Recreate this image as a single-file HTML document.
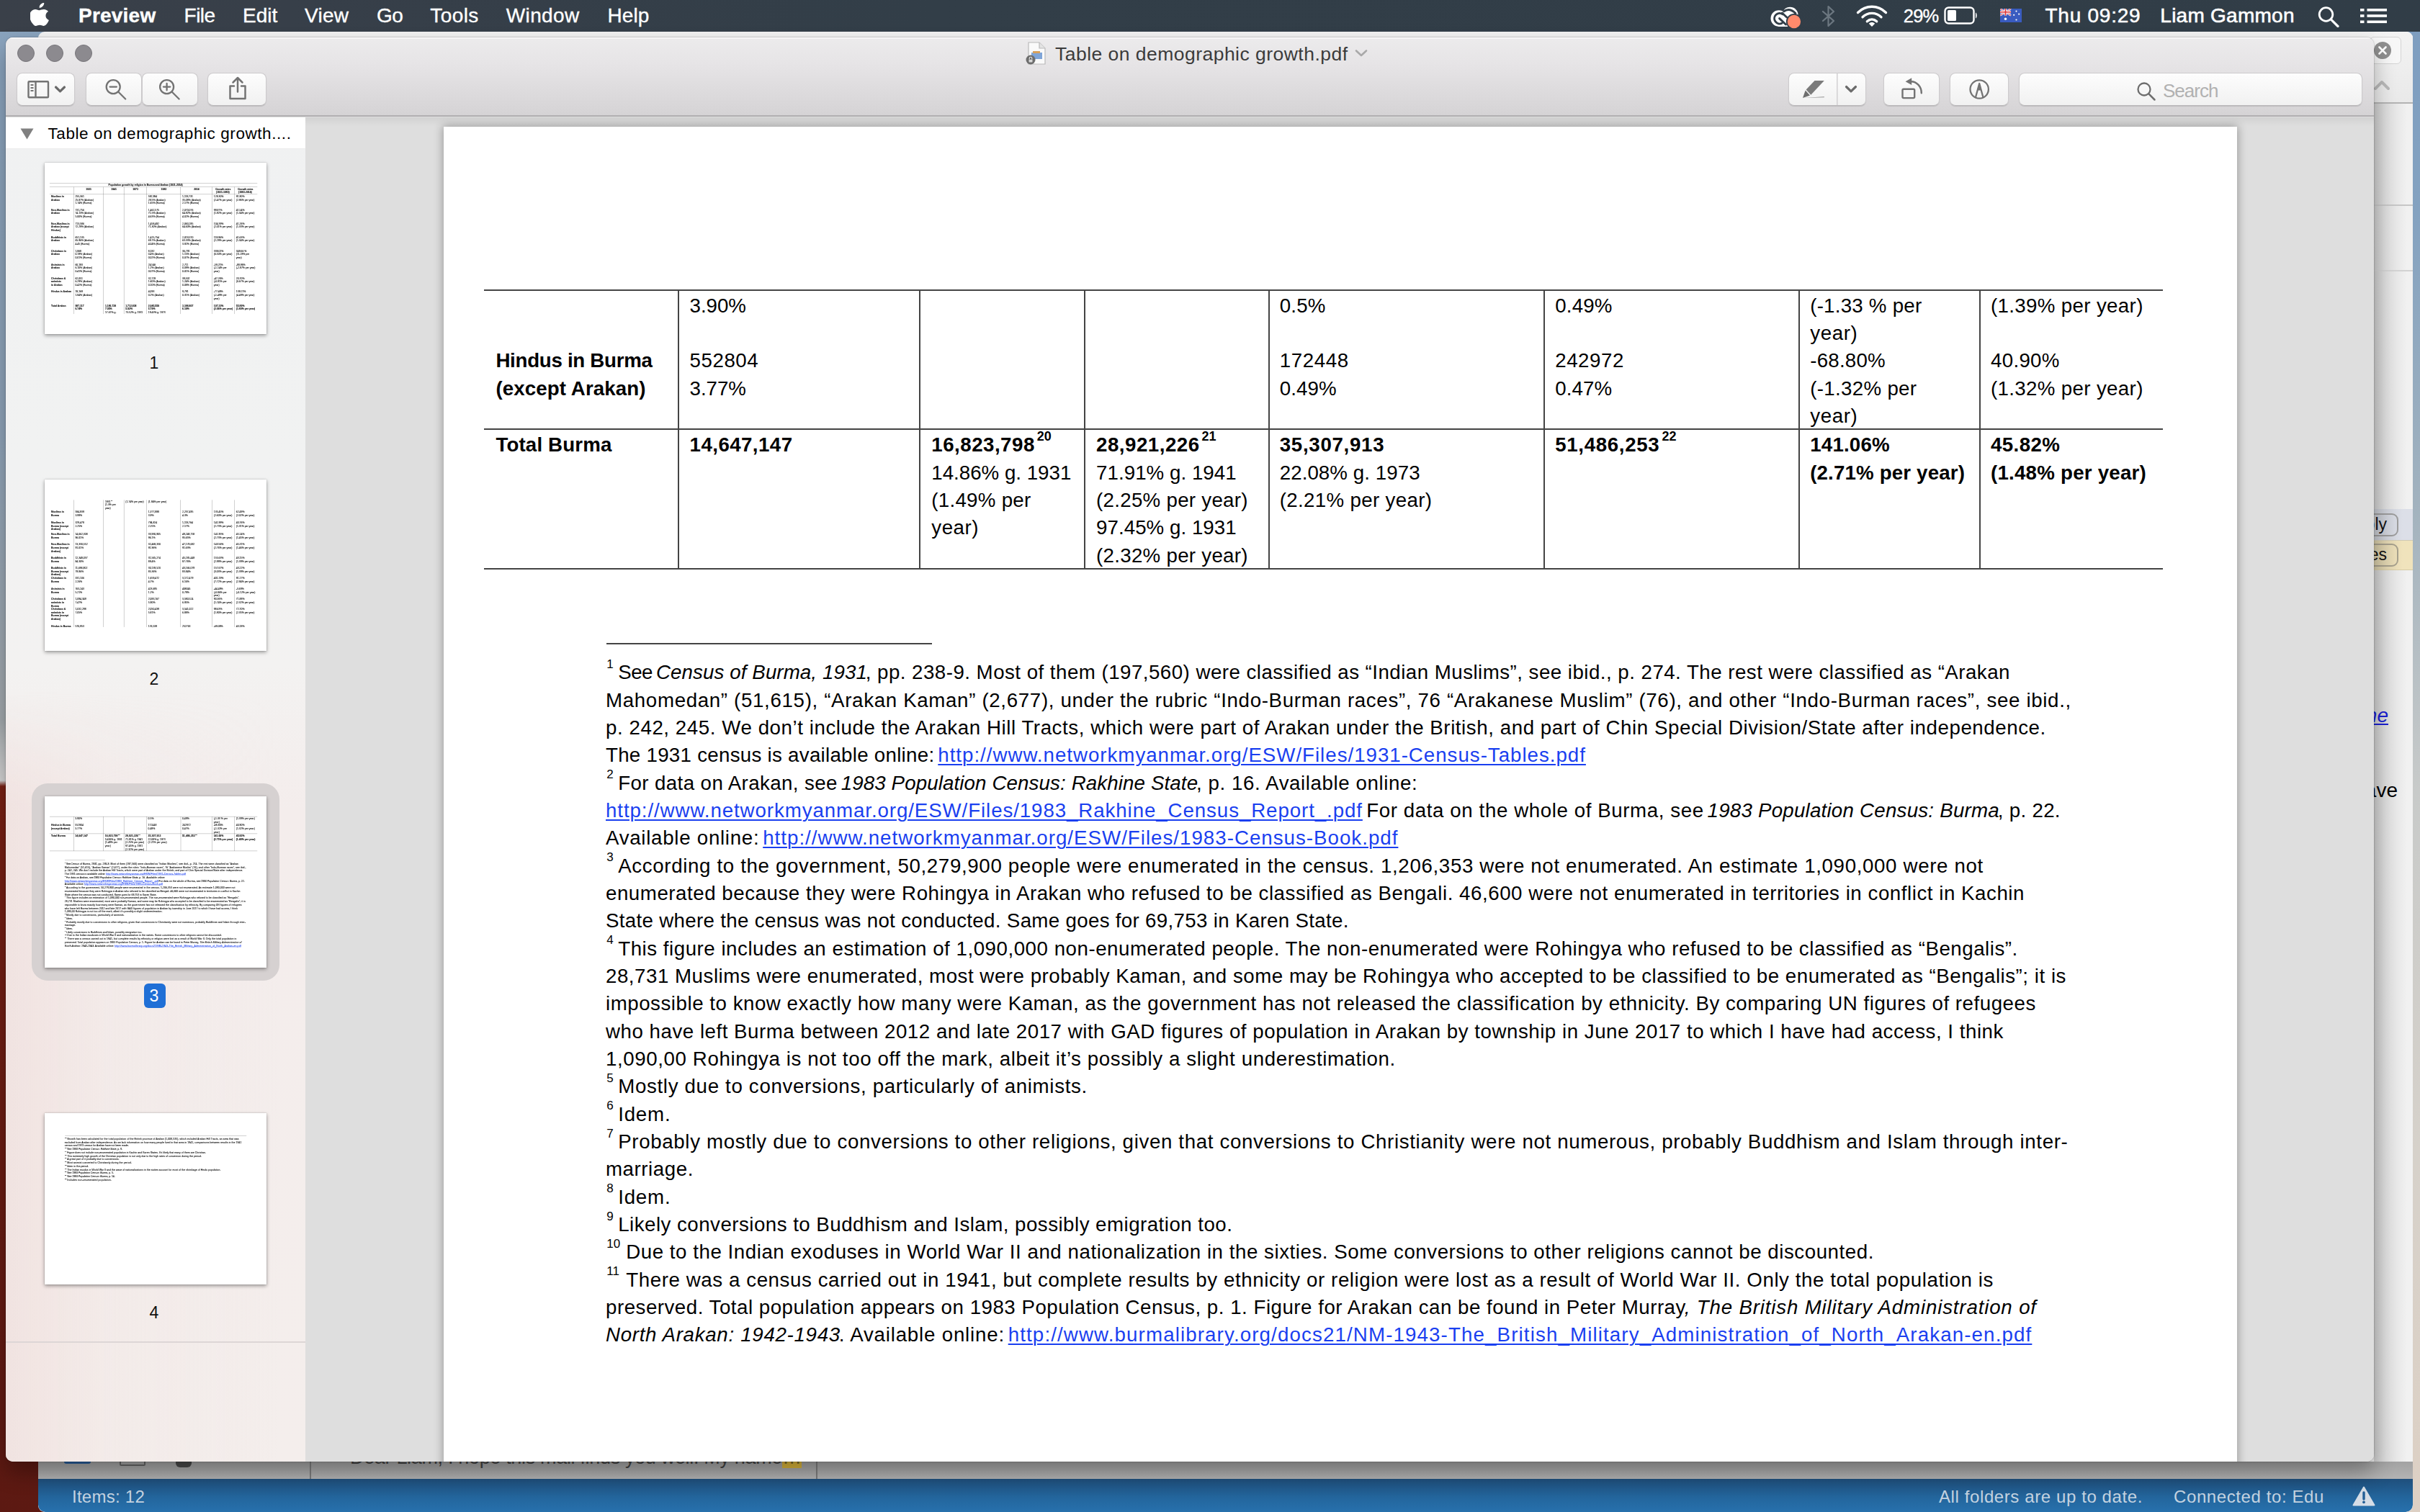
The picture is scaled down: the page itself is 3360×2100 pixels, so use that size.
<!DOCTYPE html>
<html lang="en">
<head>
<meta charset="utf-8">
<title>Table on demographic growth.pdf</title>
<style>
*{box-sizing:border-box}
html,body{margin:0;padding:0}
body{width:3360px;height:2100px;position:relative;overflow:hidden;font-family:"Liberation Sans",sans-serif;background:#5c1a14;color:#000}
.abs,.abs>*{position:absolute}
#desk{position:absolute;left:0;top:0;width:3360px;height:2100px;background:linear-gradient(180deg,#89a3be 0px,#8fa4b9 600px,#a3a9ad 1000px,#cfcfcf 1072px,#d4d4d4 1084px,#782014 1092px,#5c1912 2100px)}
#deskr{position:absolute;left:3340px;top:0;width:20px;height:2100px;background:linear-gradient(180deg,#7d9dc0 0px,#84a2c0 300px,#a2b2be 700px,#c8cac9 1100px,#d6d1ca 1600px,#ddd0c4 2100px)}
/* ---------- menubar ---------- */
#menubar{position:absolute;left:0;top:0;width:3360px;height:44px;background:linear-gradient(90deg,#3a4049 0px,#373f49 400px,#323e48 1300px,#313d47 3360px);color:#fff;font-size:28px;line-height:44px;white-space:nowrap}
#menubar>span{position:absolute;top:0;-webkit-text-stroke:.35px #fff}
#menubar svg{position:absolute}
/* ---------- outlook (back window) ---------- */
#ol{position:absolute;left:53px;top:44px;width:3297px;height:2056px;background:#f1f1f1;border-radius:9px 9px 9px 9px;overflow:hidden}
#ol .in{position:absolute;left:-53px;top:-44px;width:3360px;height:2100px}
#ol .in>*{position:absolute}
/* ---------- preview window ---------- */
#pvs{position:absolute;left:8px;top:52px;width:3288px;height:1978px;border-radius:10px;box-shadow:0 16px 30px 0 rgba(0,0,0,.30),0 0 2px rgba(0,0,0,.4)}
#pv{position:absolute;left:8px;top:52px;width:3288px;height:1978px;border-radius:10px;overflow:hidden;background:#dedede}
#pv .in{position:absolute;left:-8px;top:-52px;width:3360px;height:2100px}
#pv .in>*{position:absolute}
#tb{left:8px;top:52px;width:3288px;height:110px;background:linear-gradient(180deg,#ecebec 0%,#e6e4e6 35%,#d5d3d5 100%);border-bottom:2px solid #b1afb1;box-shadow:inset 0 2px 0 #f6f5f6}
.tl{width:24px;height:24px;border-radius:50%;background:#8c8a8f;border:1px solid #77757a;top:62px}
.btn{top:101px;height:46px;border-radius:8px;background:linear-gradient(180deg,#fdfdfd,#f1f1f1);border:1px solid #cdcbcd;border-bottom-color:#b9b7b9;box-shadow:0 1px 1px rgba(0,0,0,.12)}
.btn svg{position:absolute;left:0;top:-1px}
#title{top:57px;left:1465px;font-size:26.5px;line-height:36px;color:#3b3b3b;white-space:nowrap}
#side{left:8px;top:163px;width:416px;height:1867px;background:linear-gradient(180deg,#f0f1f2 0px,#f1f2f2 480px,#f3f2f1 760px,#f4edec 960px,#f4eeec 1867px)}
#shead{left:8px;top:163px;width:416px;height:44px;background:#fff;border-bottom:1px solid #ececec;font-size:22.5px;line-height:45px;white-space:nowrap}
.th{left:62px;width:308px;height:238px;background:#fff;box-shadow:0 2px 5px rgba(0,0,0,.38),0 0 1px rgba(0,0,0,.3);overflow:hidden}
.th .page{transform:scale(.123695);transform-origin:0 0;-webkit-text-stroke:.6px currentColor}
.num{left:184px;width:60px;text-align:center;font-size:23px;line-height:30px;color:#111}
#main{left:424px;top:163px;width:2872px;height:1867px;background:linear-gradient(180deg,#d2d2d2 0px,#dedede 12px)}
#sheet{left:616px;top:176px;width:2490px;height:1924px;background:#fff;box-shadow:0 0 12px 1px rgba(0,0,0,.32)}
/* ---------- document page ---------- */
.page{position:absolute;left:0;top:0;width:2490px;height:1924px;font-size:27.7px;line-height:38.33px;color:#000}
.page .l{position:absolute;white-space:nowrap}
.page .b{font-weight:bold}
.page .r{position:absolute;background:#444;display:block}
.page u{color:#1a3ff0;text-decoration:underline;text-decoration-thickness:2px;text-underline-offset:3px}
.page sup{font-size:18px;font-weight:bold;vertical-align:baseline;position:relative;top:-15px;line-height:0;margin-left:3px}
.page .n{position:absolute;font-size:17px;line-height:20px;white-space:nowrap}
</style>
</head>
<body>
<div id="desk"></div>
<div id="deskr"></div>

<!-- ================= back window (mail client) ================= -->
<div id="ol"><div class="in">
  <div style="left:3296px;top:44px;width:54px;height:1990px;background:linear-gradient(90deg,#cdcdcd 0px,#dedede 18px,#f1f1f1 46px)"></div>
  <div style="left:3296px;top:44px;width:54px;height:100px;background:linear-gradient(180deg,#f3f3f3,#e9e9e9)"></div>
  <div style="left:3290px;top:51px;width:44px;height:38px;border:1px solid #d4d4d4;border-radius:6px;background:#f7f7f7"></div>
  <div style="left:3296px;top:58px;width:24px;height:24px;border-radius:50%;background:#8f8f8f"></div>
  <svg style="left:3296px;top:58px" width="24" height="24" viewBox="0 0 24 24"><path d="M7.5 7.5l9 9M16.5 7.5l-9 9" stroke="#fff" stroke-width="2.6" stroke-linecap="round"/></svg>
  <svg style="left:3294px;top:108px" width="26" height="20" viewBox="0 0 26 20"><path d="M4 15l9-9 9 9" fill="none" stroke="#b9b9b9" stroke-width="4" stroke-linecap="round" stroke-linejoin="round"/></svg>
  <div style="left:3296px;top:142px;width:54px;height:2px;background:#b3b3b3"></div>
  <div style="left:3296px;top:284px;width:54px;height:2px;background:#c6c6c6"></div>
  <div style="left:3296px;top:375px;width:54px;height:2px;background:#d2d2d2"></div>
  <div style="left:3296px;top:707px;width:54px;height:43px;background:linear-gradient(90deg,#c2c5cc 0px,#dcdfe8 40px)"></div>
  <div style="left:3296px;top:750px;width:54px;height:42px;background:linear-gradient(90deg,#d3c8a6 0px,#f0e3bc 40px);border-top:1px solid #cfc9b4;border-bottom:1px solid #d6cba6"></div>
  <div style="left:3230px;top:713px;width:100px;height:32px;border:2px solid #9b9b9b;border-radius:9px;font-size:23px;line-height:27px;text-align:right;padding-right:14px;color:#111">Reply</div>
  <div style="left:3230px;top:755px;width:100px;height:32px;border:2px solid #a59f8c;border-radius:9px;font-size:23px;line-height:27px;text-align:right;padding-right:14px;color:#111">Images</div>
  <div style="left:3230px;top:974px;width:86px;text-align:right;font-size:28px;line-height:40px;font-style:italic;color:#1a1fd0;text-decoration:underline;white-space:nowrap">online</div>
  <div style="left:3230px;top:1078px;width:99px;text-align:right;font-size:28px;line-height:40px;color:#000;white-space:nowrap">have</div>
  <!-- bottom strip -->
  <div style="left:53px;top:2030px;width:3297px;height:25px;background:linear-gradient(180deg,#a2a2a2,#b4b4b4)"></div>
  <div style="left:430px;top:2030px;width:2px;height:24px;background:#7d7d7d"></div>
  <div style="left:1133px;top:2030px;width:2px;height:24px;background:#7d7d7d"></div>
  <div style="left:486px;top:2005px;font-size:27px;line-height:38px;color:#444;white-space:nowrap"><span style="letter-spacing:-0.329px;">Dear Liam, I hope this mail finds you well. My name</span><span style="background:#d9b43a;color:#7a6a2a">…</span></div>
  <div style="left:89px;top:2012px;width:37px;height:21px;border-radius:3px;background:#2a5f9c"></div>
  <div style="left:166px;top:2016px;width:36px;height:20px;border:2px solid #666;border-radius:2px"></div>
  <div style="left:244px;top:2014px;width:22px;height:24px;border-radius:6px;background:#4a4a4a"></div>
  <div style="left:53px;top:2054px;width:3297px;height:46px;background:linear-gradient(180deg,#1f4f7c,#23659c 55%,#2771ad);color:#c5d3e0;font-size:24px;line-height:46px;border-radius:0 0 10px 10px">
    <span style="position:absolute;left:47px;top:2px;white-space:nowrap"><span style="letter-spacing:0.253px;">Items: 12</span></span>
    <span style="position:absolute;left:2639px;top:2px;white-space:nowrap"><span style="letter-spacing:0.599px;">All folders are up to date.</span></span>
    <span style="position:absolute;left:2965px;top:2px;white-space:nowrap"><span style="letter-spacing:0.599px;">Connected to: Edu</span></span>
    <svg style="position:absolute;left:3213px;top:10px" width="32" height="28" viewBox="0 0 32 28"><path d="M16 1.5L30.5 26.5H1.5Z" fill="#d5dde6" stroke="#d5dde6" stroke-width="2" stroke-linejoin="round"/><path d="M16 9v9" stroke="#235f96" stroke-width="3.4" stroke-linecap="round"/><circle cx="16" cy="22.3" r="1.9" fill="#235f96"/></svg>
  </div>
</div></div>

<!-- ================= menubar ================= -->
<div id="menubar">
  <svg style="left:42px;top:4px" width="28" height="33" viewBox="0 0 170 205"><path fill="#fff" d="M150.4 172.5c-3.1 7.2-6.8 13.8-11 19.9-5.8 8.300-10.600 14-14.200 17.200-5.600 5.200-11.700 7.800-18.100 8-4.600 0-10.200-1.300-16.700-4-6.500-2.700-12.500-4-18-4-5.800 0-11.900 1.300-18.500 4-6.600 2.700-11.900 4.100-15.900 4.200-6.200.3-12.400-2.500-18.500-8.200-3.900-3.400-8.900-9.300-14.700-17.700-6.300-8.900-11.500-19.200-15.600-31-4.400-12.700-6.600-25-6.600-36.900 0-13.600 2.900-25.400 8.800-35.200 4.600-7.900 10.800-14.100 18.500-18.700 7.700-4.600 16-6.900 25-7.100 4.900 0 11.300 1.500 19.300 4.500 7.900 3 13.100 4.500 15.300 4.500 1.700 0 7.400-1.800 17-5.300 9.100-3.300 16.800-4.600 23.100-4.100 17.100 1.400 29.900 8.100 38.500 20.200-15.300 9.300-22.800 22.200-22.700 38.900.1 13 4.900 23.800 14.100 32.400 4.200 4 8.900 7.100 14.100 9.300-1.100 3.300-2.300 6.400-3.600 9.500zM111.200 4.100c0 10.200-3.700 19.600-11.100 28.400-8.900 10.400-19.700 16.400-31.400 15.500-.1-1.200-.2-2.500-.2-3.900 0-9.700 4.200-20.200 11.800-28.700 3.800-4.300 8.500-7.900 14.400-10.800 5.800-2.800 11.300-4.400 16.500-4.700.2 1.400.2 2.800.2 4.100z" transform="scale(.97 .92) translate(10 -2)"/></svg>
  <span style="left:109px;font-weight:bold"><span style="letter-spacing:0.220px;">Preview</span></span>
  <span style="left:255.6px"><span style="letter-spacing:-0.531px;">File</span></span>
  <span style="left:337px"><span style="letter-spacing:-0.012px;">Edit</span></span>
  <span style="left:423.1px"><span style="letter-spacing:0.253px;">View</span></span>
  <span style="left:523.1px"><span style="letter-spacing:-0.580px;">Go</span></span>
  <span style="left:597.2px"><span style="letter-spacing:0.445px;">Tools</span></span>
  <span style="left:702.8px"><span style="letter-spacing:0.368px;">Window</span></span>
  <span style="left:843.5px"><span style="letter-spacing:0.077px;">Help</span></span>
  <!-- right status icons -->
  <svg style="left:2456px;top:6px" width="48" height="36" viewBox="2456 6 48 36"><g fill="#fff"><circle cx="2469.800" cy="25.600" r="11.300"/><circle cx="2485.400" cy="20.800" r="11.100"/><path d="M2469 36.900h14l6-8-12-6z"/></g><g fill="none" stroke="#323e48" stroke-width="2.900" stroke-linecap="round"><path d="M2475.200 19.800A7.300 7.300 0 1 0 2474.200 32.200"/><path d="M2470.600 25.600l8.900 8.400"/><path d="M2474.400 18l6.400 6"/><path d="M2476.800 15.800Q2484.500 10.300 2493 18.600"/></g><circle cx="2490.900" cy="30" r="11" fill="#323e48"/><circle cx="2490.900" cy="30" r="9.200" fill="#ff8a6c"/></svg>
  <svg style="left:2528px;top:6px" width="22" height="34" viewBox="0 0 22 34"><path d="M3 10l15 13-7.500 7V3l7.500 7L3 23" fill="none" stroke="#6c7780" stroke-width="2.2" stroke-linejoin="round" stroke-linecap="round"/></svg>
  <svg style="left:2577px;top:6px" width="44" height="32" viewBox="0 0 44 32"><g fill="none" stroke="#fff" stroke-width="3.300" stroke-linecap="round"><path d="M2.500 11.500C13.500 0.500 30.500 0.500 41.500 11.500"/><path d="M9 17.800c7.500-7.200 18.500-7.200 26 0"/><path d="M15.300 23.800c4-3.700 9.400-3.700 13.400 0"/></g><path d="M22 31l-4.200-4.300c2.500-2.200 5.900-2.200 8.400 0z" fill="#fff"/></svg>
  <span style="left:2642.8px;font-size:25.500px;top:0"><span style="letter-spacing:-0.816px;">29%</span></span>
  <svg style="left:2699px;top:9px" width="48" height="26" viewBox="0 0 48 26"><rect x="1.500" y="1.500" width="40" height="22" rx="5" fill="none" stroke="#fff" stroke-width="2.400"/><rect x="5" y="5" width="12" height="15" rx="1.500" fill="#fff"/><path d="M44 8.500c2.200.8 2.200 7.200 0 8z" fill="#fff"/></svg>
  <svg style="left:2777px;top:12px" width="30" height="19" viewBox="0 0 30 19"><rect width="30" height="19" fill="#3a5cc0"/><path d="M0 0l15 9.500M15 0L0 9.500" stroke="#fff" stroke-width="2.200"/><path d="M0 0l15 9.500M15 0L0 9.500" stroke="#d33" stroke-width=".9"/><path d="M7.500 0v9.500M0 4.750h15" stroke="#fff" stroke-width="3.400"/><path d="M7.500 0v9.500M0 4.750h15" stroke="#d33" stroke-width="1.700"/><g fill="#fff"><circle cx="7.500" cy="14.300" r="1.700"/><circle cx="22.500" cy="3.600" r="1.100"/><circle cx="26.200" cy="7.600" r="1.100"/><circle cx="19.200" cy="8.800" r="1.100"/><circle cx="22.500" cy="15.500" r="1.100"/></g></svg>
  <span style="left:2839.5px;-webkit-text-stroke:.5px #fff"><span style="letter-spacing:0.755px;">Thu 09:29</span></span>
  <span style="left:2999.3px;-webkit-text-stroke:.6px #fff"><span style="letter-spacing:0.261px;">Liam Gammon</span></span>
  <svg style="left:3217px;top:8px" width="32" height="30" viewBox="0 0 32 30"><circle cx="12.500" cy="12" r="9.300" fill="none" stroke="#fff" stroke-width="2.800"/><path d="M19.300 18.800l9.700 9.700" stroke="#fff" stroke-width="3.200" stroke-linecap="round"/></svg>
  <svg style="left:3277px;top:11px" width="38" height="22" viewBox="0 0 38 22"><g fill="#fff"><rect x="0" y="1" width="5.500" height="3.600"/><rect x="0" y="9.200" width="5.500" height="3.600"/><rect x="0" y="17.500" width="5.500" height="3.600"/><rect x="9.500" y="1" width="27.500" height="3.600"/><rect x="9.500" y="9.200" width="27.500" height="3.600"/><rect x="9.500" y="17.500" width="27.500" height="3.600"/></g></svg>
</div>

<!-- ================= preview window ================= -->
<div id="pvs"></div>
<div id="pv"><div class="in">
  <div id="main"></div>
  <div id="sheet"><div class="page">
<i class="r" style="left:56.0px;top:226px;width:2331.3px;height:2px"></i>
<i class="r" style="left:56.0px;top:419px;width:2331.3px;height:2px"></i>
<i class="r" style="left:56.0px;top:613px;width:2331.3px;height:2px"></i>
<i class="r" style="left:325px;top:226.6px;width:2px;height:387.3px"></i>
<i class="r" style="left:660px;top:226.6px;width:2px;height:387.3px"></i>
<i class="r" style="left:889px;top:226.6px;width:2px;height:387.3px"></i>
<i class="r" style="left:1145px;top:226.6px;width:2px;height:387.3px"></i>
<i class="r" style="left:1527px;top:226.6px;width:2px;height:387.3px"></i>
<i class="r" style="left:1881px;top:226.6px;width:2px;height:387.3px"></i>
<i class="r" style="left:2132px;top:226.6px;width:2px;height:387.3px"></i>
<div class="l b" style="left:72.4px;top:306.4px;letter-spacing:-0.288px;">Hindus in Burma</div>
<div class="l b" style="left:72.4px;top:344.7px;letter-spacing:0.099px;">(except Arakan)</div>
<div class="l" style="left:341.6px;top:229.7px;letter-spacing:-0.063px;">3.90%</div>
<div class="l" style="left:341.6px;top:306.4px;letter-spacing:0.532px;">552804</div>
<div class="l" style="left:341.6px;top:344.7px;letter-spacing:-0.063px;">3.77%</div>
<div class="l" style="left:1160.7px;top:229.7px;letter-spacing:0.223px;">0.5%</div>
<div class="l" style="left:1160.7px;top:306.4px;letter-spacing:0.632px;">172448</div>
<div class="l" style="left:1160.7px;top:344.7px;letter-spacing:0.097px;">0.49%</div>
<div class="l" style="left:1543.2px;top:229.7px;letter-spacing:0.197px;">0.49%</div>
<div class="l" style="left:1543.2px;top:306.4px;letter-spacing:0.549px;">242972</div>
<div class="l" style="left:1543.2px;top:344.7px;letter-spacing:0.137px;">0.47%</div>
<div class="l" style="left:1897.2px;top:229.7px;letter-spacing:0.237px;">(-1.33 % per</div>
<div class="l" style="left:1897.2px;top:268.1px;letter-spacing:0.621px;">year)</div>
<div class="l" style="left:1897.2px;top:306.4px;letter-spacing:0.237px;">-68.80%</div>
<div class="l" style="left:1897.2px;top:344.7px;letter-spacing:0.321px;">(-1.32% per</div>
<div class="l" style="left:1897.2px;top:383.1px;letter-spacing:0.621px;">year)</div>
<div class="l" style="left:2148.0px;top:229.7px;letter-spacing:0.343px;">(1.39% per year)</div>
<div class="l" style="left:2148.0px;top:306.4px;letter-spacing:0.299px;">40.90%</div>
<div class="l" style="left:2148.0px;top:344.7px;letter-spacing:0.343px;">(1.32% per year)</div>
<div class="l b" style="left:72.4px;top:423.1px;letter-spacing:0.156px;">Total Burma</div>
<div class="l b" style="left:341.6px;top:423.1px;letter-spacing:0.432px;">14,647,147</div>
<div class="l b" style="left:677.3px;top:423.1px;"><span style="letter-spacing:0.492px;">16,823,798</span><sup>20</sup></div>
<div class="l" style="left:677.3px;top:461.5px;letter-spacing:0.001px;">14.86% g. 1931</div>
<div class="l" style="left:677.3px;top:499.8px;letter-spacing:0.276px;">(1.49% per</div>
<div class="l" style="left:677.3px;top:538.1px;letter-spacing:0.501px;">year)</div>
<div class="l b" style="left:906.1px;top:423.1px;"><span style="letter-spacing:0.492px;">28,921,226</span><sup>21</sup></div>
<div class="l" style="left:906.1px;top:461.5px;letter-spacing:0.044px;">71.91% g. 1941</div>
<div class="l" style="left:906.1px;top:499.8px;letter-spacing:0.280px;">(2.25% per year)</div>
<div class="l" style="left:906.1px;top:538.1px;letter-spacing:0.044px;">97.45% g. 1931</div>
<div class="l" style="left:906.1px;top:576.5px;letter-spacing:0.280px;">(2.32% per year)</div>
<div class="l b" style="left:1160.7px;top:423.1px;letter-spacing:0.702px;">35,307,913</div>
<div class="l" style="left:1160.7px;top:461.5px;letter-spacing:0.073px;">22.08% g. 1973</div>
<div class="l" style="left:1160.7px;top:499.8px;letter-spacing:0.343px;">(2.21% per year)</div>
<div class="l b" style="left:1543.2px;top:423.1px;"><span style="letter-spacing:0.662px;">51,486,253</span><sup>22</sup></div>
<div class="l b" style="left:1897.2px;top:423.1px;letter-spacing:0.198px;">141.06%</div>
<div class="l b" style="left:1897.2px;top:461.5px;letter-spacing:0.157px;">(2.71% per year)</div>
<div class="l b" style="left:2148.0px;top:423.1px;letter-spacing:0.382px;">45.82%</div>
<div class="l b" style="left:2148.0px;top:461.5px;letter-spacing:0.226px;">(1.48% per year)</div>
<i class="r" style="left:226.3px;top:717px;width:452.2px;height:2px"></i>
<div class="l" style="left:242.2px;top:739.2px;letter-spacing:-0.522px;">See</div>
<div class="l" style="left:295.0px;top:739.2px;letter-spacing:0.096px;"><i>Census of Burma, 1931</i></div>
<div class="l" style="left:585.7px;top:739.2px;letter-spacing:0.473px;">, pp. 238-9. Most of them (197,560) were classified as “Indian Muslims”, see ibid., p. 274. The rest were classified as “Arakan</div>
<div class="n" style="left:226.3px;top:736.8px">1</div>
<div class="l" style="left:225.0px;top:777.6px;letter-spacing:0.661px;">Mahomedan” (51,615), “Arakan Kaman” (2,677), under the rubric “Indo-Burman races”, 76 “Arakanese Muslim” (76), and other “Indo-Burman races”, see ibid.,</div>
<div class="l" style="left:225.0px;top:815.9px;letter-spacing:0.562px;">p. 242, 245. We don’t include the Arakan Hill Tracts, which were part of Arakan under the British, and part of Chin Special Division/State after independence.</div>
<div class="l" style="left:225.0px;top:854.2px;letter-spacing:0.278px;">The 1931 census is available online:</div>
<div class="l" style="left:686.3px;top:854.2px;letter-spacing:0.983px;"><u>http://www.networkmyanmar.org/ESW/Files/1931-Census-Tables.pdf</u></div>
<div class="l" style="left:242.2px;top:892.6px;letter-spacing:0.399px;">For data on Arakan, see</div>
<div class="l" style="left:551.7px;top:892.6px;letter-spacing:0.121px;"><i>1983 Population Census: Rakhine State</i></div>
<div class="l" style="left:1045.0px;top:892.6px;letter-spacing:0.586px;">, p. 16. Available online:</div>
<div class="n" style="left:226.3px;top:890.1px">2</div>
<div class="l" style="left:225.0px;top:930.9px;letter-spacing:0.907px;"><u>http://www.networkmyanmar.org/ESW/Files/1983_Rakhine_Census_Report_.pdf</u></div>
<div class="l" style="left:1281.3px;top:930.9px;letter-spacing:0.586px;">For data on the whole of Burma, see</div>
<div class="l" style="left:1754.5px;top:930.9px;letter-spacing:0.233px;"><i>1983 Population Census: Burma</i></div>
<div class="l" style="left:2157.7px;top:930.9px;letter-spacing:0.316px;">, p. 22.</div>
<div class="l" style="left:225.0px;top:969.2px;letter-spacing:0.721px;">Available online:</div>
<div class="l" style="left:443.2px;top:969.2px;letter-spacing:1.008px;"><u>http://www.networkmyanmar.org/ESW/Files/1983-Census-Book.pdf</u></div>
<div class="l" style="left:242.2px;top:1007.6px;letter-spacing:0.649px;">According to the government, 50,279,900 people were enumerated in the census. 1,206,353 were not enumerated. An estimate 1,090,000 were not</div>
<div class="n" style="left:226.3px;top:1005.1px">3</div>
<div class="l" style="left:225.0px;top:1045.9px;letter-spacing:0.536px;">enumerated because they were Rohingya in Arakan who refused to be classified as Bengali. 46,600 were not enumerated in territories in conflict in Kachin</div>
<div class="l" style="left:225.0px;top:1084.2px;letter-spacing:0.322px;">State where the census was not conducted. Same goes for 69,753 in Karen State.</div>
<div class="l" style="left:242.2px;top:1122.6px;letter-spacing:0.525px;">This figure includes an estimation of 1,090,000 non-enumerated people. The non-enumerated were Rohingya who refused to be classified as “Bengalis”.</div>
<div class="n" style="left:226.3px;top:1120.1px">4</div>
<div class="l" style="left:225.0px;top:1160.9px;letter-spacing:0.520px;">28,731 Muslims were enumerated, most were probably Kaman, and some may be Rohingya who accepted to be classified to be enumerated as “Bengalis”; it is</div>
<div class="l" style="left:225.0px;top:1199.2px;letter-spacing:0.527px;">impossible to know exactly how many were Kaman, as the government has not released the classification by ethnicity. By comparing UN figures of refugees</div>
<div class="l" style="left:225.0px;top:1237.6px;letter-spacing:0.520px;">who have left Burma between 2012 and late 2017 with GAD figures of population in Arakan by township in June 2017 to which I have had access, I think</div>
<div class="l" style="left:225.0px;top:1275.9px;letter-spacing:0.594px;">1,090,00 Rohingya is not too off the mark, albeit it’s possibly a slight underestimation.</div>
<div class="l" style="left:242.2px;top:1314.2px;letter-spacing:0.666px;">Mostly due to conversions, particularly of animists.</div>
<div class="n" style="left:226.3px;top:1311.8px">5</div>
<div class="l" style="left:242.2px;top:1352.6px;letter-spacing:0.790px;">Idem.</div>
<div class="n" style="left:226.3px;top:1350.1px">6</div>
<div class="l" style="left:242.2px;top:1390.9px;letter-spacing:0.647px;">Probably mostly due to conversions to other religions, given that conversions to Christianity were not numerous, probably Buddhism and Islam through inter-</div>
<div class="n" style="left:226.3px;top:1388.5px">7</div>
<div class="l" style="left:225.0px;top:1429.2px;letter-spacing:0.550px;">marriage.</div>
<div class="l" style="left:242.2px;top:1467.6px;letter-spacing:0.790px;">Idem.</div>
<div class="n" style="left:226.3px;top:1465.1px">8</div>
<div class="l" style="left:242.2px;top:1505.9px;letter-spacing:0.476px;">Likely conversions to Buddhism and Islam, possibly emigration too.</div>
<div class="n" style="left:226.3px;top:1503.5px">9</div>
<div class="l" style="left:253.2px;top:1544.2px;letter-spacing:0.541px;">Due to the Indian exoduses in World War II and nationalization in the sixties. Some conversions to other religions cannot be discounted.</div>
<div class="n" style="left:226.3px;top:1541.8px">10</div>
<div class="l" style="left:253.2px;top:1582.6px;letter-spacing:0.581px;">There was a census carried out in 1941, but complete results by ethnicity or religion were lost as a result of World War II. Only the total population is</div>
<div class="n" style="left:226.3px;top:1580.1px">11</div>
<div class="l" style="left:225.0px;top:1620.9px;letter-spacing:0.506px;">preserved. Total population appears on 1983 Population Census, p. 1. Figure for Arakan can be found in Peter Murray</div>
<div class="l" style="left:1722.7px;top:1620.9px;letter-spacing:0.831px;"><i>, The British Military Administration of</i></div>
<div class="l" style="left:225.0px;top:1659.2px;letter-spacing:0.696px;"><i>North Arakan: 1942-1943</i></div>
<div class="l" style="left:548.7px;top:1659.2px;letter-spacing:0.800px;">. Available online:</div>
<div class="l" style="left:783.7px;top:1659.2px;letter-spacing:1.130px;"><u>http://www.burmalibrary.org/docs21/NM-1943-The_British_Military_Administration_of_North_Arakan-en.pdf</u></div>
  </div></div>
  <div id="side"></div>
  <div style="left:8px;top:960px;width:416px;height:1070px;background:linear-gradient(90deg,rgba(236,208,204,.34) 0px,rgba(240,222,219,.15) 150px,rgba(243,236,235,0) 380px);-webkit-mask-image:linear-gradient(180deg,transparent 0px,#000 160px);mask-image:linear-gradient(180deg,transparent 0px,#000 160px)"></div>
  <div style="left:8px;top:1863px;width:416px;height:2px;background:#ddd6d6"></div>
  <div id="shead"><svg style="position:absolute;left:20px;top:15px" width="19" height="16" viewBox="0 0 19 16"><path d="M.5.500h18L9.500 15.500z" fill="#808080"/></svg><span style="position:absolute;left:58.500px;top:0"><span style="letter-spacing:0.575px;">Table on demographic growth....</span></span></div>
  <!-- thumbnails -->
  <div class="th" style="top:226px"><div class="page">
<i class="r" style="left:56.0px;top:230px;width:2331.3px;height:2px"></i>
<i class="r" style="left:56.0px;top:271px;width:2331.3px;height:2px"></i>
<i class="r" style="left:56.0px;top:354px;width:2331.3px;height:2px"></i>
<i class="r" style="left:324px;top:272.0px;width:2px;height:1426.0px"></i>
<i class="r" style="left:660px;top:272.0px;width:2px;height:1426.0px"></i>
<i class="r" style="left:889px;top:272.0px;width:2px;height:1426.0px"></i>
<i class="r" style="left:1145px;top:272.0px;width:2px;height:1426.0px"></i>
<i class="r" style="left:1526px;top:272.0px;width:2px;height:1426.0px"></i>
<i class="r" style="left:1880px;top:272.0px;width:2px;height:1426.0px"></i>
<i class="r" style="left:2132px;top:272.0px;width:2px;height:1426.0px"></i>
<div class="l b" style="left:715.0px;top:234.2px;">Population growth by religion in Burma and Arakan (1931-2014)</div>
<div class="l b" style="left:463.4px;top:276.2px;">1931</div>
<div class="l b" style="left:745.6px;top:276.2px;">1941</div>
<div class="l b" style="left:987.9px;top:276.2px;">1973</div>
<div class="l b" style="left:1306.6px;top:276.2px;">1983</div>
<div class="l b" style="left:1674.5px;top:276.2px;">2014</div>
<div class="l b" style="left:1918.5px;top:276.2px;">Growth rates</div>
<div class="l b" style="left:1924.5px;top:314.6px;">(1931-1983)</div>
<div class="l b" style="left:2169.3px;top:276.2px;">Growth rates</div>
<div class="l b" style="left:2175.3px;top:314.6px;">(1983-2014)</div>
<div class="l b" style="left:73.7px;top:358.2px;">Muslims in</div>
<div class="l b" style="left:73.7px;top:396.6px;">Arakan</div>
<div class="l" style="left:342.9px;top:358.2px;">255,361</div>
<div class="l" style="left:342.9px;top:396.6px;">25.87% (Arakan)</div>
<div class="l" style="left:342.9px;top:434.9px;">1.74% (Burma)</div>
<div class="l" style="left:1162.0px;top:358.2px;">582,984</div>
<div class="l" style="left:1162.0px;top:396.6px;">28.5% (Arakan)</div>
<div class="l" style="left:1162.0px;top:434.9px;">1.65% (Burma)</div>
<div class="l" style="left:1544.5px;top:358.2px;">1,118,731</div>
<div class="l" style="left:1544.5px;top:396.6px;">35.08% (Arakan)</div>
<div class="l" style="left:1544.5px;top:434.9px;">2.17% (Burma)</div>
<div class="l" style="left:1898.5px;top:358.2px;">128.30%</div>
<div class="l" style="left:1898.5px;top:396.6px;">(2.47% per year)</div>
<div class="l" style="left:2149.3px;top:358.2px;">91.90%</div>
<div class="l" style="left:2149.3px;top:396.6px;">(2.96% per year)</div>
<div class="l b" style="left:73.7px;top:511.5px;">Non-Muslims in</div>
<div class="l b" style="left:73.7px;top:549.9px;">Arakan</div>
<div class="l" style="left:342.9px;top:511.5px;">731,756</div>
<div class="l" style="left:342.9px;top:549.9px;">74.13% (Arakan)</div>
<div class="l" style="left:342.9px;top:588.2px;">5.00% (Burma)</div>
<div class="l" style="left:1162.0px;top:511.5px;">1,462,575</div>
<div class="l" style="left:1162.0px;top:549.9px;">71.5% (Arakan)</div>
<div class="l" style="left:1162.0px;top:588.2px;">4.63% (Burma)</div>
<div class="l" style="left:1544.5px;top:511.5px;">2,070,076</div>
<div class="l" style="left:1544.5px;top:549.9px;">64.92% (Arakan)</div>
<div class="l" style="left:1544.5px;top:588.2px;">4.02% (Burma)</div>
<div class="l" style="left:1898.5px;top:511.5px;">99.87%</div>
<div class="l" style="left:1898.5px;top:549.9px;">(1.92% per year)</div>
<div class="l" style="left:2149.3px;top:511.5px;">41.54%</div>
<div class="l" style="left:2149.3px;top:549.9px;">(1.34% per year)</div>
<div class="l b" style="left:73.7px;top:664.8px;">Non-Muslims in</div>
<div class="l b" style="left:73.7px;top:703.2px;">Arakan (except</div>
<div class="l b" style="left:73.7px;top:741.5px;">Hindus)</div>
<div class="l" style="left:342.9px;top:664.8px;">713,586</div>
<div class="l" style="left:342.9px;top:703.2px;">72.29% (Arakan)</div>
<div class="l" style="left:1162.0px;top:664.8px;">1,458,482</div>
<div class="l" style="left:1162.0px;top:703.2px;">71.30% (Arakan)</div>
<div class="l" style="left:1544.5px;top:664.8px;">2,060,285</div>
<div class="l" style="left:1544.5px;top:703.2px;">64.60% (Arakan)</div>
<div class="l" style="left:1898.5px;top:664.8px;">104.39%</div>
<div class="l" style="left:1898.5px;top:703.2px;">(2.01% per year)</div>
<div class="l" style="left:2149.3px;top:664.8px;">41.26%</div>
<div class="l" style="left:2149.3px;top:703.2px;">(1.33% per year)</div>
<div class="l b" style="left:73.7px;top:818.1px;">Buddhists in</div>
<div class="l b" style="left:73.7px;top:856.5px;">Arakan</div>
<div class="l" style="left:342.9px;top:818.1px;">651,135</div>
<div class="l" style="left:342.9px;top:856.5px;">65.96% (Arakan)</div>
<div class="l" style="left:342.9px;top:894.8px;">4.45 (Burma)</div>
<div class="l" style="left:1162.0px;top:818.1px;">1,425,754</div>
<div class="l" style="left:1162.0px;top:856.5px;">69.7% (Arakan)</div>
<div class="l" style="left:1162.0px;top:894.8px;">4.04% (Burma)</div>
<div class="l" style="left:1544.5px;top:818.1px;">2,019,370</div>
<div class="l" style="left:1544.5px;top:856.5px;">63.33% (Arakan)</div>
<div class="l" style="left:1544.5px;top:894.8px;">3.92% (Burma)</div>
<div class="l" style="left:1898.5px;top:818.1px;">118.96%</div>
<div class="l" style="left:1898.5px;top:856.5px;">(2.29% per year)</div>
<div class="l" style="left:2149.3px;top:818.1px;">41.63%</div>
<div class="l" style="left:2149.3px;top:856.5px;">(1.34% per year)</div>
<div class="l b" style="left:73.7px;top:971.4px;">Christians in</div>
<div class="l b" style="left:73.7px;top:1009.8px;">Arakan</div>
<div class="l" style="left:342.9px;top:971.4px;">1,868</div>
<div class="l" style="left:342.9px;top:1009.8px;">0.19% (Arakan)</div>
<div class="l" style="left:342.9px;top:1048.1px;">0.01% (Burma)</div>
<div class="l" style="left:1162.0px;top:971.4px;">8,182</div>
<div class="l" style="left:1162.0px;top:1009.8px;">0.4% (Arakan)</div>
<div class="l" style="left:1162.0px;top:1048.1px;">0.02% (Burma)</div>
<div class="l" style="left:1544.5px;top:971.4px;">36,791</div>
<div class="l" style="left:1544.5px;top:1009.8px;">1.15% (Arakan)</div>
<div class="l" style="left:1544.5px;top:1048.1px;">0.07% (Burma)</div>
<div class="l" style="left:1898.5px;top:971.4px;">338.01%</div>
<div class="l" style="left:1898.5px;top:1009.8px;">(6.50% per year)</div>
<div class="l" style="left:2149.3px;top:971.4px;">349.66 %</div>
<div class="l" style="left:2149.3px;top:1009.8px;">(11.28% per</div>
<div class="l" style="left:2149.3px;top:1048.1px;">year)</div>
<div class="l b" style="left:73.7px;top:1124.7px;">Animists in</div>
<div class="l b" style="left:73.7px;top:1163.1px;">Arakan</div>
<div class="l" style="left:342.9px;top:1124.7px;">60,183</div>
<div class="l" style="left:342.9px;top:1163.1px;">6.10% (Arakan)</div>
<div class="l" style="left:342.9px;top:1201.4px;">0.41% (Burma)</div>
<div class="l" style="left:1162.0px;top:1124.7px;">24,546</div>
<div class="l" style="left:1162.0px;top:1163.1px;">1.2% (Arakan)</div>
<div class="l" style="left:1162.0px;top:1201.4px;">0.07% (Burma)</div>
<div class="l" style="left:1544.5px;top:1124.7px;">2,711</div>
<div class="l" style="left:1544.5px;top:1163.1px;">0.09% (Arakan)</div>
<div class="l" style="left:1544.5px;top:1201.4px;">0.01% (Burma)</div>
<div class="l" style="left:1898.5px;top:1124.7px;">-59.21%</div>
<div class="l" style="left:1898.5px;top:1163.1px;">(-1.14% per</div>
<div class="l" style="left:1898.5px;top:1201.4px;">year)</div>
<div class="l" style="left:2149.3px;top:1124.7px;">-88.96%</div>
<div class="l" style="left:2149.3px;top:1163.1px;">(-2.87% per year)</div>
<div class="l b" style="left:73.7px;top:1278.0px;">Christians &</div>
<div class="l b" style="left:73.7px;top:1316.4px;">animists</div>
<div class="l b" style="left:73.7px;top:1354.7px;">in Arakan</div>
<div class="l" style="left:342.9px;top:1278.0px;">62,051</div>
<div class="l" style="left:342.9px;top:1316.4px;">6.29% (Arakan)</div>
<div class="l" style="left:342.9px;top:1354.7px;">0.42% (Burma)</div>
<div class="l" style="left:1162.0px;top:1278.0px;">32,728</div>
<div class="l" style="left:1162.0px;top:1316.4px;">1.60% (Arakan)</div>
<div class="l" style="left:1162.0px;top:1354.7px;">0.10% (Burma)</div>
<div class="l" style="left:1544.5px;top:1278.0px;">39,502</div>
<div class="l" style="left:1544.5px;top:1316.4px;">1.24% (Arakan)</div>
<div class="l" style="left:1544.5px;top:1354.7px;">0.08% (Burma)</div>
<div class="l" style="left:1898.5px;top:1278.0px;">-47.26%</div>
<div class="l" style="left:1898.5px;top:1316.4px;">(-0.91% per</div>
<div class="l" style="left:1898.5px;top:1354.7px;">year)</div>
<div class="l" style="left:2149.3px;top:1278.0px;">20.70%</div>
<div class="l" style="left:2149.3px;top:1316.4px;">(0.67% per year)</div>
<div class="l b" style="left:73.7px;top:1431.3px;">Hindus in Arakan</div>
<div class="l" style="left:342.9px;top:1431.3px;">18,169</div>
<div class="l" style="left:342.9px;top:1469.7px;">1.84% (Arakan)</div>
<div class="l" style="left:1162.0px;top:1431.3px;">4,093</div>
<div class="l" style="left:1162.0px;top:1469.7px;">0.2% (Arakan)</div>
<div class="l" style="left:1544.5px;top:1431.3px;">9,791</div>
<div class="l" style="left:1544.5px;top:1469.7px;">0.31% (Arakan)</div>
<div class="l" style="left:1898.5px;top:1431.3px;">-77.48%</div>
<div class="l" style="left:1898.5px;top:1469.7px;">(-1.49% per</div>
<div class="l" style="left:1898.5px;top:1508.0px;">year)</div>
<div class="l" style="left:2149.3px;top:1431.3px;">139.21%</div>
<div class="l" style="left:2149.3px;top:1469.7px;">(4.49% per year)</div>
<div class="l b" style="left:73.7px;top:1584.6px;">Total Arakan</div>
<div class="l b" style="left:342.9px;top:1584.6px;">987,117</div>
<div class="l b" style="left:342.9px;top:1623.0px;">6.74%</div>
<div class="l b" style="left:1162.0px;top:1584.6px;">2,045,559</div>
<div class="l b" style="left:1162.0px;top:1623.0px;">5.79%</div>
<div class="l" style="left:1162.0px;top:1661.3px;">19.43% g. 1973</div>
<div class="l b" style="left:1544.5px;top:1584.6px;">3,188,807</div>
<div class="l b" style="left:1544.5px;top:1623.0px;">6.19%</div>
<div class="l b" style="left:1898.5px;top:1584.6px;">107.23%</div>
<div class="l b" style="left:1898.5px;top:1623.0px;">(2.06% per year)</div>
<div class="l b" style="left:2149.3px;top:1584.6px;">55.89%</div>
<div class="l b" style="left:2149.3px;top:1623.0px;">(1.80% per year)</div>
<div class="l b" style="left:678.6px;top:1584.6px;">1,186,738</div>
<div class="l b" style="left:678.6px;top:1623.0px;">7.05%</div>
<div class="l" style="left:678.6px;top:1661.3px;">17.67% g.</div>
<div class="l b" style="left:907.4px;top:1584.6px;">1,712,838</div>
<div class="l b" style="left:907.4px;top:1623.0px;">5.92%</div>
<div class="l" style="left:907.4px;top:1661.3px;">73.52% g. 1931</div>
  </div></div>
  <div class="num" style="top:489px">1</div>
  <div class="th" style="top:666px"><div class="page">
<i class="r" style="left:324px;top:229.0px;width:2px;height:1428.0px"></i>
<i class="r" style="left:660px;top:229.0px;width:2px;height:1428.0px"></i>
<i class="r" style="left:889px;top:229.0px;width:2px;height:1428.0px"></i>
<i class="r" style="left:1145px;top:229.0px;width:2px;height:1428.0px"></i>
<i class="r" style="left:1526px;top:229.0px;width:2px;height:1428.0px"></i>
<i class="r" style="left:1880px;top:229.0px;width:2px;height:1428.0px"></i>
<i class="r" style="left:2132px;top:229.0px;width:2px;height:1428.0px"></i>
<div class="l" style="left:678.6px;top:228.2px;">1931<sup>11</sup></div>
<div class="l" style="left:678.6px;top:266.6px;">(1.3% per</div>
<div class="l" style="left:678.6px;top:304.9px;">year)</div>
<div class="l" style="left:907.4px;top:228.2px;">(1.74% per year)</div>
<div class="l" style="left:1162.0px;top:228.2px;">(1.94% per year)</div>
<div class="l b" style="left:73.7px;top:342.8px;">Muslims in</div>
<div class="l b" style="left:73.7px;top:381.2px;">Burma</div>
<div class="l" style="left:342.9px;top:342.8px;">584,839</div>
<div class="l" style="left:342.9px;top:381.2px;">3.99%</div>
<div class="l" style="left:1162.0px;top:342.8px;">1,377,888</div>
<div class="l" style="left:1162.0px;top:381.2px;">3.9%</div>
<div class="l" style="left:1544.5px;top:342.8px;">2,237,495</div>
<div class="l" style="left:1544.5px;top:381.2px;">4.3%</div>
<div class="l" style="left:1898.5px;top:342.8px;">135.45%</div>
<div class="l" style="left:1898.5px;top:381.2px;">(2.60% per year)</div>
<div class="l" style="left:2149.3px;top:342.8px;">62.49%</div>
<div class="l" style="left:2149.3px;top:381.2px;">(2.02% per year)</div>
<div class="l b" style="left:73.7px;top:464.2px;">Muslims in</div>
<div class="l b" style="left:73.7px;top:502.6px;">Burma (except</div>
<div class="l b" style="left:73.7px;top:540.9px;">Arakan)</div>
<div class="l" style="left:342.9px;top:464.2px;">329,478</div>
<div class="l" style="left:342.9px;top:502.6px;">2.25%</div>
<div class="l" style="left:1162.0px;top:464.2px;">794,824</div>
<div class="l" style="left:1162.0px;top:502.6px;">2.25%</div>
<div class="l" style="left:1544.5px;top:464.2px;">1,118,764</div>
<div class="l" style="left:1544.5px;top:502.6px;">2.17%</div>
<div class="l" style="left:1898.5px;top:464.2px;">141.99%</div>
<div class="l" style="left:1898.5px;top:502.6px;">(2.73% per year)</div>
<div class="l" style="left:2149.3px;top:464.2px;">40.76%</div>
<div class="l" style="left:2149.3px;top:502.6px;">(1.31% per year)</div>
<div class="l b" style="left:73.7px;top:592.2px;">Non-Muslims in</div>
<div class="l b" style="left:73.7px;top:630.6px;">Burma</div>
<div class="l" style="left:342.9px;top:592.2px;">14,062,308</div>
<div class="l" style="left:342.9px;top:630.6px;">96.01%</div>
<div class="l" style="left:1162.0px;top:592.2px;">33,930,905</div>
<div class="l" style="left:1162.0px;top:630.6px;">96.1%</div>
<div class="l" style="left:1544.5px;top:592.2px;">49,248,758</div>
<div class="l" style="left:1544.5px;top:630.6px;">95.65%</div>
<div class="l" style="left:1898.5px;top:592.2px;">141.95%</div>
<div class="l" style="left:1898.5px;top:630.6px;">(2.73% per year)</div>
<div class="l" style="left:2149.3px;top:592.2px;">45.14%</div>
<div class="l" style="left:2149.3px;top:630.6px;">(1.45% per year)</div>
<div class="l b" style="left:73.7px;top:708.8px;">Non-Muslims in</div>
<div class="l b" style="left:73.7px;top:747.2px;">Burma (except</div>
<div class="l b" style="left:73.7px;top:785.5px;">Arakan)</div>
<div class="l" style="left:342.9px;top:708.8px;">13,330,552</div>
<div class="l" style="left:342.9px;top:747.2px;">91.01%</div>
<div class="l" style="left:1162.0px;top:708.8px;">32,468,330</div>
<div class="l" style="left:1162.0px;top:747.2px;">91.96%</div>
<div class="l" style="left:1544.5px;top:708.8px;">47,178,682</div>
<div class="l" style="left:1544.5px;top:747.2px;">91.63%</div>
<div class="l" style="left:1898.5px;top:708.8px;">143.56%</div>
<div class="l" style="left:1898.5px;top:747.2px;">(2.76% per year)</div>
<div class="l" style="left:2149.3px;top:708.8px;">45.31%</div>
<div class="l" style="left:2149.3px;top:747.2px;">(1.46% per year)</div>
<div class="l b" style="left:73.7px;top:861.2px;">Buddhists in</div>
<div class="l b" style="left:73.7px;top:899.6px;">Burma</div>
<div class="l" style="left:342.9px;top:861.2px;">12,348,037</div>
<div class="l" style="left:342.9px;top:899.6px;">84.30%</div>
<div class="l" style="left:1162.0px;top:861.2px;">31,565,274</div>
<div class="l" style="left:1162.0px;top:899.6px;">89.4%</div>
<div class="l" style="left:1544.5px;top:861.2px;">45,185,449</div>
<div class="l" style="left:1544.5px;top:899.6px;">87.76%</div>
<div class="l" style="left:1898.5px;top:861.2px;">155.63%</div>
<div class="l" style="left:1898.5px;top:899.6px;">(2.99% per year)</div>
<div class="l" style="left:2149.3px;top:861.2px;">43.15%</div>
<div class="l" style="left:2149.3px;top:899.6px;">(1.39% per year)</div>
<div class="l b" style="left:73.7px;top:973.8px;">Buddhists in</div>
<div class="l b" style="left:73.7px;top:1012.2px;">Burma (except</div>
<div class="l b" style="left:73.7px;top:1050.5px;">Arakan)</div>
<div class="l" style="left:342.9px;top:973.8px;">11,696,902</div>
<div class="l" style="left:342.9px;top:1012.2px;">79.86%</div>
<div class="l" style="left:1162.0px;top:973.8px;">30,139,520</div>
<div class="l" style="left:1162.0px;top:1012.2px;">85.36%</div>
<div class="l" style="left:1544.5px;top:973.8px;">43,166,079</div>
<div class="l" style="left:1544.5px;top:1012.2px;">83.84%</div>
<div class="l" style="left:1898.5px;top:973.8px;">157.67%</div>
<div class="l" style="left:1898.5px;top:1012.2px;">(3.03% per year)</div>
<div class="l" style="left:2149.3px;top:973.8px;">43.22%</div>
<div class="l" style="left:2149.3px;top:1012.2px;">(1.39% per year)</div>
<div class="l b" style="left:73.7px;top:1088.2px;">Christians in</div>
<div class="l b" style="left:73.7px;top:1126.6px;">Burma</div>
<div class="l" style="left:342.9px;top:1088.2px;">331,106</div>
<div class="l" style="left:342.9px;top:1126.6px;">2.26%</div>
<div class="l" style="left:1162.0px;top:1088.2px;">1,659,472</div>
<div class="l" style="left:1162.0px;top:1126.6px;">4.7%</div>
<div class="l" style="left:1544.5px;top:1088.2px;">3,172,479</div>
<div class="l" style="left:1544.5px;top:1126.6px;">6.16%</div>
<div class="l" style="left:1898.5px;top:1088.2px;">401.19%</div>
<div class="l" style="left:1898.5px;top:1126.6px;">(7.72% per year)</div>
<div class="l" style="left:2149.3px;top:1088.2px;">91.17%</div>
<div class="l" style="left:2149.3px;top:1126.6px;">(2.94% per year)</div>
<div class="l b" style="left:73.7px;top:1207.2px;">Animists in</div>
<div class="l b" style="left:73.7px;top:1245.6px;">Burma</div>
<div class="l" style="left:342.9px;top:1207.2px;">763,243</div>
<div class="l" style="left:342.9px;top:1245.6px;">5.21%</div>
<div class="l" style="left:1162.0px;top:1207.2px;">423,695</div>
<div class="l" style="left:1162.0px;top:1245.6px;">1.2%</div>
<div class="l" style="left:1544.5px;top:1207.2px;">408045</div>
<div class="l" style="left:1544.5px;top:1245.6px;">0.79%</div>
<div class="l" style="left:1898.5px;top:1207.2px;">-44.49%</div>
<div class="l" style="left:1898.5px;top:1245.6px;">(-0.86% per</div>
<div class="l" style="left:1898.5px;top:1283.9px;">year)</div>
<div class="l" style="left:2149.3px;top:1207.2px;">-3.69%</div>
<div class="l" style="left:2149.3px;top:1245.6px;">(-0.12% per year)</div>
<div class="l b" style="left:73.7px;top:1321.9px;">Christians &</div>
<div class="l b" style="left:73.7px;top:1360.3px;">animists in</div>
<div class="l b" style="left:73.7px;top:1398.6px;">Burma</div>
<div class="l" style="left:342.9px;top:1321.9px;">1,094,349</div>
<div class="l" style="left:342.9px;top:1360.3px;">7.47%</div>
<div class="l" style="left:1162.0px;top:1321.9px;">2,083,167</div>
<div class="l" style="left:1162.0px;top:1360.3px;">5.90%</div>
<div class="l" style="left:1544.5px;top:1321.9px;">3,580,524</div>
<div class="l" style="left:1544.5px;top:1360.3px;">6.95%</div>
<div class="l" style="left:1898.5px;top:1321.9px;">90.36%</div>
<div class="l" style="left:1898.5px;top:1360.3px;">(1.74% per year)</div>
<div class="l" style="left:2149.3px;top:1321.9px;">71.88%</div>
<div class="l" style="left:2149.3px;top:1360.3px;">(2.32% per year)</div>
<div class="l b" style="left:73.7px;top:1434.2px;">Christians &</div>
<div class="l b" style="left:73.7px;top:1472.6px;">animists in</div>
<div class="l b" style="left:73.7px;top:1510.9px;">Burma (except</div>
<div class="l b" style="left:73.7px;top:1549.2px;">Arakan)</div>
<div class="l" style="left:342.9px;top:1434.2px;">1,032,298</div>
<div class="l" style="left:342.9px;top:1472.6px;">7.05%</div>
<div class="l" style="left:1162.0px;top:1434.2px;">2,050,439</div>
<div class="l" style="left:1162.0px;top:1472.6px;">5.81%</div>
<div class="l" style="left:1544.5px;top:1434.2px;">3,541,022</div>
<div class="l" style="left:1544.5px;top:1472.6px;">6.88%</div>
<div class="l" style="left:1898.5px;top:1434.2px;">98.63%</div>
<div class="l" style="left:1898.5px;top:1472.6px;">(1.90% per year)</div>
<div class="l" style="left:2149.3px;top:1434.2px;">72.70%</div>
<div class="l" style="left:2149.3px;top:1472.6px;">(2.35% per year)</div>
<div class="l b" style="left:73.7px;top:1627.2px;">Hindus in Burma</div>
<div class="l" style="left:342.9px;top:1627.2px;">570,953</div>
<div class="l" style="left:1162.0px;top:1627.2px;">176,539</div>
<div class="l" style="left:1544.5px;top:1627.2px;">252763</div>
<div class="l" style="left:1898.5px;top:1627.2px;">-69.08%</div>
<div class="l" style="left:2149.3px;top:1627.2px;">43.18%</div>
  </div></div>
  <div class="num" style="top:928px">2</div>
  <div style="left:44px;top:1088px;width:344px;height:274px;border-radius:22px;background:#d6d1d1"></div>
  <div class="th" style="top:1106px"><div class="page">
<i class="r" style="left:56.0px;top:226px;width:2331.3px;height:2px"></i>
<i class="r" style="left:56.0px;top:419px;width:2331.3px;height:2px"></i>
<i class="r" style="left:56.0px;top:613px;width:2331.3px;height:2px"></i>
<i class="r" style="left:325px;top:226.6px;width:2px;height:387.3px"></i>
<i class="r" style="left:660px;top:226.6px;width:2px;height:387.3px"></i>
<i class="r" style="left:889px;top:226.6px;width:2px;height:387.3px"></i>
<i class="r" style="left:1145px;top:226.6px;width:2px;height:387.3px"></i>
<i class="r" style="left:1527px;top:226.6px;width:2px;height:387.3px"></i>
<i class="r" style="left:1881px;top:226.6px;width:2px;height:387.3px"></i>
<i class="r" style="left:2132px;top:226.6px;width:2px;height:387.3px"></i>
<div class="l b" style="left:72.4px;top:306.4px;letter-spacing:-0.288px;">Hindus in Burma</div>
<div class="l b" style="left:72.4px;top:344.7px;letter-spacing:0.099px;">(except Arakan)</div>
<div class="l" style="left:341.6px;top:229.7px;letter-spacing:-0.063px;">3.90%</div>
<div class="l" style="left:341.6px;top:306.4px;letter-spacing:0.532px;">552804</div>
<div class="l" style="left:341.6px;top:344.7px;letter-spacing:-0.063px;">3.77%</div>
<div class="l" style="left:1160.7px;top:229.7px;letter-spacing:0.223px;">0.5%</div>
<div class="l" style="left:1160.7px;top:306.4px;letter-spacing:0.632px;">172448</div>
<div class="l" style="left:1160.7px;top:344.7px;letter-spacing:0.097px;">0.49%</div>
<div class="l" style="left:1543.2px;top:229.7px;letter-spacing:0.197px;">0.49%</div>
<div class="l" style="left:1543.2px;top:306.4px;letter-spacing:0.549px;">242972</div>
<div class="l" style="left:1543.2px;top:344.7px;letter-spacing:0.137px;">0.47%</div>
<div class="l" style="left:1897.2px;top:229.7px;letter-spacing:0.237px;">(-1.33 % per</div>
<div class="l" style="left:1897.2px;top:268.1px;letter-spacing:0.621px;">year)</div>
<div class="l" style="left:1897.2px;top:306.4px;letter-spacing:0.237px;">-68.80%</div>
<div class="l" style="left:1897.2px;top:344.7px;letter-spacing:0.321px;">(-1.32% per</div>
<div class="l" style="left:1897.2px;top:383.1px;letter-spacing:0.621px;">year)</div>
<div class="l" style="left:2148.0px;top:229.7px;letter-spacing:0.343px;">(1.39% per year)</div>
<div class="l" style="left:2148.0px;top:306.4px;letter-spacing:0.299px;">40.90%</div>
<div class="l" style="left:2148.0px;top:344.7px;letter-spacing:0.343px;">(1.32% per year)</div>
<div class="l b" style="left:72.4px;top:423.1px;letter-spacing:0.156px;">Total Burma</div>
<div class="l b" style="left:341.6px;top:423.1px;letter-spacing:0.432px;">14,647,147</div>
<div class="l b" style="left:677.3px;top:423.1px;"><span style="letter-spacing:0.492px;">16,823,798</span><sup>20</sup></div>
<div class="l" style="left:677.3px;top:461.5px;letter-spacing:0.001px;">14.86% g. 1931</div>
<div class="l" style="left:677.3px;top:499.8px;letter-spacing:0.276px;">(1.49% per</div>
<div class="l" style="left:677.3px;top:538.1px;letter-spacing:0.501px;">year)</div>
<div class="l b" style="left:906.1px;top:423.1px;"><span style="letter-spacing:0.492px;">28,921,226</span><sup>21</sup></div>
<div class="l" style="left:906.1px;top:461.5px;letter-spacing:0.044px;">71.91% g. 1941</div>
<div class="l" style="left:906.1px;top:499.8px;letter-spacing:0.280px;">(2.25% per year)</div>
<div class="l" style="left:906.1px;top:538.1px;letter-spacing:0.044px;">97.45% g. 1931</div>
<div class="l" style="left:906.1px;top:576.5px;letter-spacing:0.280px;">(2.32% per year)</div>
<div class="l b" style="left:1160.7px;top:423.1px;letter-spacing:0.702px;">35,307,913</div>
<div class="l" style="left:1160.7px;top:461.5px;letter-spacing:0.073px;">22.08% g. 1973</div>
<div class="l" style="left:1160.7px;top:499.8px;letter-spacing:0.343px;">(2.21% per year)</div>
<div class="l b" style="left:1543.2px;top:423.1px;"><span style="letter-spacing:0.662px;">51,486,253</span><sup>22</sup></div>
<div class="l b" style="left:1897.2px;top:423.1px;letter-spacing:0.198px;">141.06%</div>
<div class="l b" style="left:1897.2px;top:461.5px;letter-spacing:0.157px;">(2.71% per year)</div>
<div class="l b" style="left:2148.0px;top:423.1px;letter-spacing:0.382px;">45.82%</div>
<div class="l b" style="left:2148.0px;top:461.5px;letter-spacing:0.226px;">(1.48% per year)</div>
<i class="r" style="left:226.3px;top:717px;width:452.2px;height:2px"></i>
<div class="l" style="left:242.2px;top:739.2px;letter-spacing:-0.522px;">See</div>
<div class="l" style="left:295.0px;top:739.2px;letter-spacing:0.096px;"><i>Census of Burma, 1931</i></div>
<div class="l" style="left:585.7px;top:739.2px;letter-spacing:0.473px;">, pp. 238-9. Most of them (197,560) were classified as “Indian Muslims”, see ibid., p. 274. The rest were classified as “Arakan</div>
<div class="n" style="left:226.3px;top:736.8px">1</div>
<div class="l" style="left:225.0px;top:777.6px;letter-spacing:0.661px;">Mahomedan” (51,615), “Arakan Kaman” (2,677), under the rubric “Indo-Burman races”, 76 “Arakanese Muslim” (76), and other “Indo-Burman races”, see ibid.,</div>
<div class="l" style="left:225.0px;top:815.9px;letter-spacing:0.562px;">p. 242, 245. We don’t include the Arakan Hill Tracts, which were part of Arakan under the British, and part of Chin Special Division/State after independence.</div>
<div class="l" style="left:225.0px;top:854.2px;letter-spacing:0.278px;">The 1931 census is available online:</div>
<div class="l" style="left:686.3px;top:854.2px;letter-spacing:0.983px;"><u>http://www.networkmyanmar.org/ESW/Files/1931-Census-Tables.pdf</u></div>
<div class="l" style="left:242.2px;top:892.6px;letter-spacing:0.399px;">For data on Arakan, see</div>
<div class="l" style="left:551.7px;top:892.6px;letter-spacing:0.121px;"><i>1983 Population Census: Rakhine State</i></div>
<div class="l" style="left:1045.0px;top:892.6px;letter-spacing:0.586px;">, p. 16. Available online:</div>
<div class="n" style="left:226.3px;top:890.1px">2</div>
<div class="l" style="left:225.0px;top:930.9px;letter-spacing:0.907px;"><u>http://www.networkmyanmar.org/ESW/Files/1983_Rakhine_Census_Report_.pdf</u></div>
<div class="l" style="left:1281.3px;top:930.9px;letter-spacing:0.586px;">For data on the whole of Burma, see</div>
<div class="l" style="left:1754.5px;top:930.9px;letter-spacing:0.233px;"><i>1983 Population Census: Burma</i></div>
<div class="l" style="left:2157.7px;top:930.9px;letter-spacing:0.316px;">, p. 22.</div>
<div class="l" style="left:225.0px;top:969.2px;letter-spacing:0.721px;">Available online:</div>
<div class="l" style="left:443.2px;top:969.2px;letter-spacing:1.008px;"><u>http://www.networkmyanmar.org/ESW/Files/1983-Census-Book.pdf</u></div>
<div class="l" style="left:242.2px;top:1007.6px;letter-spacing:0.649px;">According to the government, 50,279,900 people were enumerated in the census. 1,206,353 were not enumerated. An estimate 1,090,000 were not</div>
<div class="n" style="left:226.3px;top:1005.1px">3</div>
<div class="l" style="left:225.0px;top:1045.9px;letter-spacing:0.536px;">enumerated because they were Rohingya in Arakan who refused to be classified as Bengali. 46,600 were not enumerated in territories in conflict in Kachin</div>
<div class="l" style="left:225.0px;top:1084.2px;letter-spacing:0.322px;">State where the census was not conducted. Same goes for 69,753 in Karen State.</div>
<div class="l" style="left:242.2px;top:1122.6px;letter-spacing:0.525px;">This figure includes an estimation of 1,090,000 non-enumerated people. The non-enumerated were Rohingya who refused to be classified as “Bengalis”.</div>
<div class="n" style="left:226.3px;top:1120.1px">4</div>
<div class="l" style="left:225.0px;top:1160.9px;letter-spacing:0.520px;">28,731 Muslims were enumerated, most were probably Kaman, and some may be Rohingya who accepted to be classified to be enumerated as “Bengalis”; it is</div>
<div class="l" style="left:225.0px;top:1199.2px;letter-spacing:0.527px;">impossible to know exactly how many were Kaman, as the government has not released the classification by ethnicity. By comparing UN figures of refugees</div>
<div class="l" style="left:225.0px;top:1237.6px;letter-spacing:0.520px;">who have left Burma between 2012 and late 2017 with GAD figures of population in Arakan by township in June 2017 to which I have had access, I think</div>
<div class="l" style="left:225.0px;top:1275.9px;letter-spacing:0.594px;">1,090,00 Rohingya is not too off the mark, albeit it’s possibly a slight underestimation.</div>
<div class="l" style="left:242.2px;top:1314.2px;letter-spacing:0.666px;">Mostly due to conversions, particularly of animists.</div>
<div class="n" style="left:226.3px;top:1311.8px">5</div>
<div class="l" style="left:242.2px;top:1352.6px;letter-spacing:0.790px;">Idem.</div>
<div class="n" style="left:226.3px;top:1350.1px">6</div>
<div class="l" style="left:242.2px;top:1390.9px;letter-spacing:0.647px;">Probably mostly due to conversions to other religions, given that conversions to Christianity were not numerous, probably Buddhism and Islam through inter-</div>
<div class="n" style="left:226.3px;top:1388.5px">7</div>
<div class="l" style="left:225.0px;top:1429.2px;letter-spacing:0.550px;">marriage.</div>
<div class="l" style="left:242.2px;top:1467.6px;letter-spacing:0.790px;">Idem.</div>
<div class="n" style="left:226.3px;top:1465.1px">8</div>
<div class="l" style="left:242.2px;top:1505.9px;letter-spacing:0.476px;">Likely conversions to Buddhism and Islam, possibly emigration too.</div>
<div class="n" style="left:226.3px;top:1503.5px">9</div>
<div class="l" style="left:253.2px;top:1544.2px;letter-spacing:0.541px;">Due to the Indian exoduses in World War II and nationalization in the sixties. Some conversions to other religions cannot be discounted.</div>
<div class="n" style="left:226.3px;top:1541.8px">10</div>
<div class="l" style="left:253.2px;top:1582.6px;letter-spacing:0.581px;">There was a census carried out in 1941, but complete results by ethnicity or religion were lost as a result of World War II. Only the total population is</div>
<div class="n" style="left:226.3px;top:1580.1px">11</div>
<div class="l" style="left:225.0px;top:1620.9px;letter-spacing:0.506px;">preserved. Total population appears on 1983 Population Census, p. 1. Figure for Arakan can be found in Peter Murray</div>
<div class="l" style="left:1722.7px;top:1620.9px;letter-spacing:0.831px;"><i>, The British Military Administration of</i></div>
<div class="l" style="left:225.0px;top:1659.2px;letter-spacing:0.696px;"><i>North Arakan: 1942-1943</i></div>
<div class="l" style="left:548.7px;top:1659.2px;letter-spacing:0.800px;">. Available online:</div>
<div class="l" style="left:783.7px;top:1659.2px;letter-spacing:1.130px;"><u>http://www.burmalibrary.org/docs21/NM-1943-The_British_Military_Administration_of_North_Arakan-en.pdf</u></div>
  </div></div>
  <div style="left:200px;top:1366px;width:30px;height:34px;border-radius:6px;background:#1f6fd6"></div>
  <div class="num" style="top:1368px;color:#fff">3</div>
  <div class="th" style="top:1546px"><div class="page">
<i class="r" style="left:228.0px;top:252px;width:2037.0px;height:2px"></i>
<div class="l" style="left:253.0px;top:270.2px;letter-spacing:0.752px;">Growth has been calculated for the total population of the British province of Arakan (1,008,535), which included Arakan Hill Tracts, an area that was</div>
<div class="n" style="left:226.3px;top:267.8px">12</div>
<div class="l" style="left:225.0px;top:308.6px;letter-spacing:0.608px;">excluded from Arakan after independence. As we lack information on how many people lived in that area in 1941, comparisons between results in the 1941</div>
<div class="l" style="left:225.0px;top:346.9px;letter-spacing:0.204px;">census and 1973 census for Arakan have not been made.</div>
<div class="l" style="left:253.0px;top:385.2px;letter-spacing:0.055px;">See <i>1983 Population Census: Rakhine State</i>, p. 9.</div>
<div class="n" style="left:226.3px;top:382.8px">13</div>
<div class="l" style="left:253.0px;top:423.6px;letter-spacing:0.478px;">Figure does not include non-enumerated population in Kachin and Karen States. It’s likely that many of them are Christian.</div>
<div class="n" style="left:226.3px;top:421.1px">14</div>
<div class="l" style="left:253.0px;top:461.9px;letter-spacing:0.501px;">This extremely high growth of the Christian population is not only due to the high rates of conversion during the period.</div>
<div class="n" style="left:226.3px;top:459.4px">15</div>
<div class="l" style="left:253.0px;top:500.2px;letter-spacing:0.590px;">A great part of it probably due to conversions.</div>
<div class="n" style="left:226.3px;top:497.8px">16</div>
<div class="l" style="left:253.0px;top:538.5px;letter-spacing:0.695px;">Most animist converted to Christianity during the period.</div>
<div class="n" style="left:226.3px;top:536.1px">17</div>
<div class="l" style="left:253.0px;top:576.9px;letter-spacing:0.398px;">Idem in this period.</div>
<div class="n" style="left:226.3px;top:574.4px">18</div>
<div class="l" style="left:253.0px;top:615.2px;letter-spacing:0.544px;">The Indian exodus in World War II and the wave of nationalizations in the sixties account for most of the shrinkage of Hindu population.</div>
<div class="n" style="left:226.3px;top:612.8px">19</div>
<div class="l" style="left:253.0px;top:653.5px;letter-spacing:-0.100px;">See <i>1983 Population Census: Burma</i>, p. 5.</div>
<div class="n" style="left:226.3px;top:651.1px">20</div>
<div class="l" style="left:253.0px;top:691.9px;letter-spacing:-0.083px;">See <i>1983 Population Census: Burma</i>, p. 14.</div>
<div class="n" style="left:226.3px;top:689.4px">21</div>
<div class="l" style="left:253.0px;top:730.2px;letter-spacing:1.164px;">Includes non-enumerated population.</div>
<div class="n" style="left:226.3px;top:727.8px">22</div>
  </div></div>
  <div class="num" style="top:1808px">4</div>

  <!-- title bar + toolbar -->
  <div id="tb"></div>
  <div class="tl" style="left:24px"></div><div class="tl" style="left:64px"></div><div class="tl" style="left:104px"></div>
  <svg style="left:1424px;top:58px" width="30" height="33" viewBox="0 0 30 33"><path d="M4 1h15l8 8v22H4z" fill="#fafafa" stroke="#b9b9b9" stroke-width="1.200"/><path d="M19 1v8h8" fill="#e4e4e4" stroke="#b9b9b9" stroke-width="1.200"/><rect x="8" y="15" width="15" height="9" fill="#7fa5d8"/><rect x="10" y="13" width="10" height="3" fill="#d9a15a"/><circle cx="7" cy="25" r="6.500" fill="#6d6d6d"/><rect x="4.500" y="24.800" width="5" height="3.800" rx=".8" fill="#d8d8d8"/><path d="M5.200 24.500v-1.500a1.800 1.800 0 0 1 3.600 0v1.500" fill="none" stroke="#e8e8e8" stroke-width="1.100"/></svg>
  <div id="title"><span style="letter-spacing:0.472px;">Table on demographic growth.pdf</span></div>
  <svg style="left:1881px;top:68px" width="18" height="12" viewBox="0 0 18 12"><path d="M2 2.500l7 6.500 7-6.500" fill="none" stroke="#a9a9a9" stroke-width="2.600" stroke-linecap="round" stroke-linejoin="round"/></svg>

  <div class="btn" style="left:23px;width:81px"><svg width="80" height="45" viewBox="0 0 80 45"><g fill="none" stroke="#737373" stroke-width="2.400"><rect x="15.500" y="12.200" width="27.500" height="22" rx="1"/><path d="M25.500 12.200v22"/></g><path d="M18.500 17h4M18.500 21h4M18.500 25h4" stroke="#737373" stroke-width="1.800"/><path d="M53.500 20l6 5.800 6-5.800" fill="none" stroke="#6a6a6a" stroke-width="3.200" stroke-linecap="round" stroke-linejoin="round"/></svg></div>
  <div class="btn" style="left:119px;width:78px"><svg width="77" height="45" viewBox="0 0 77 45"><g fill="none" stroke="#737373" stroke-width="2.300" stroke-linecap="round"><circle cx="37.200" cy="19.600" r="9.500"/><path d="M44.200 26.500l10 10"/><path d="M32.500 19.600h9.400"/></g></svg></div>
  <div class="btn" style="left:197px;width:78px"><svg width="77" height="45" viewBox="0 0 77 45"><g fill="none" stroke="#737373" stroke-width="2.300" stroke-linecap="round"><circle cx="33.600" cy="19.600" r="9.500"/><path d="M40.600 26.500l10 10"/><path d="M28.900 19.600h9.400M33.600 14.900v9.400"/></g></svg></div>
  <div class="btn" style="left:288px;width:82px"><svg width="81" height="45" viewBox="0 0 81 45"><g fill="none" stroke="#737373" stroke-width="2.500" stroke-linecap="round" stroke-linejoin="round"><path d="M36 18.500h-5.500v17.500h21V18.500H46"/><path d="M41 26.500V7.500M34.500 13.500l6.500-6.500 6.500 6.500"/></g></svg></div>

  <div class="btn" style="left:2483px;width:108px"><svg width="107" height="45" viewBox="0 0 107 45"><path d="M66.800 0v47" stroke="#d2d0d2" stroke-width="1.500"/><path d="M35.500 11h13.300L30.300 30.700l-6.700-7.300z" fill="#7b7b7b"/><path d="M22.700 24.500l6.300 7-10 3.400z" fill="#6e6e6e"/><path d="M19 34.900L48.800 33.300v1z" fill="#8a8a8a"/><path d="M79.500 19.500l6.500 6.300 6.500-6.300" fill="none" stroke="#6b6b6b" stroke-width="3.200" stroke-linecap="round" stroke-linejoin="round"/></svg></div>
  <div class="btn" style="left:2615px;width:78px"><svg width="77" height="45" viewBox="0 0 77 45"><g fill="none" stroke="#737373" stroke-width="2.400" stroke-linejoin="round" stroke-linecap="round"><rect x="25.500" y="22.800" width="16.700" height="12.300" rx="1.500"/><path d="M37.300 12.200A14.500 16 0 0 1 51.800 28.300"/></g><path d="M29.600 12.200L38.200 7.300v9.800z" fill="#737373"/></svg></div>
  <div class="btn" style="left:2707px;width:82px"><svg width="81" height="45" viewBox="0 0 81 45"><g fill="none" stroke="#737373" stroke-width="2.300" stroke-linejoin="round"><circle cx="40.200" cy="23" r="12.700"/><path d="M35 34l5.200-19 5.200 19"/></g><path d="M40.200 14.300l-3 10.200h6z" fill="#737373"/></svg></div>
  <div class="btn" style="left:2803px;width:477px"><svg style="left:161.500px;top:11px" width="28" height="28" viewBox="0 0 28 28"><circle cx="11" cy="11" r="8.500" fill="none" stroke="#6e6e6e" stroke-width="2.300"/><path d="M17.200 17.200l8.300 8.300" stroke="#6e6e6e" stroke-width="2.500" stroke-linecap="round"/></svg><span style="position:absolute;left:199px;top:6px;font-size:26px;line-height:36px;color:#b1b1b1;white-space:nowrap"><span style="letter-spacing:-0.982px;">Search</span></span></div>
</div></div>
</body>
</html>
